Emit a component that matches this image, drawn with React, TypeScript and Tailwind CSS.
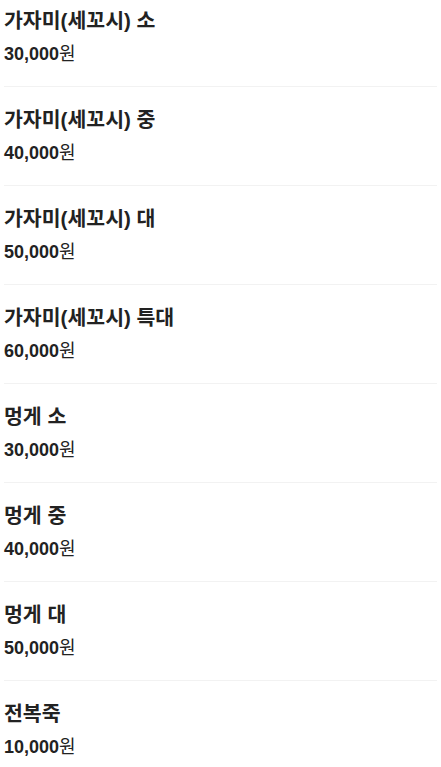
const items = [
  { name: '가자미(세꼬시) 소', price: '30,000' },
  { name: '가자미(세꼬시) 중', price: '40,000' },
  { name: '가자미(세꼬시) 대', price: '50,000' },
  { name: '가자미(세꼬시) 특대', price: '60,000' },
  { name: '멍게 소', price: '30,000' },
  { name: '멍게 중', price: '40,000' },
  { name: '멍게 대', price: '50,000' },
  { name: '전복죽', price: '10,000' },
];

export default function App() {
  return (
    <div className="min-h-screen bg-white px-1 text-[#222] font-['Liberation_Sans','Noto_Sans_CJK_KR',sans-serif]">
      <ul className="flex flex-col">
        {items.map((item, i) => (
          <li
            key={i}
            className="border-b border-[#f2f2f2] pt-[19px] pb-[18px] first:pt-[7px] last:border-b-0"
          >
            <div className="text-[20.5px] font-bold leading-[28px]">{item.name}</div>
            <div className="mt-[5px] text-[18px] leading-[28px]">
              <span className="font-bold">{item.price}</span>
              <span>원</span>
            </div>
          </li>
        ))}
      </ul>
    </div>
  );
}
